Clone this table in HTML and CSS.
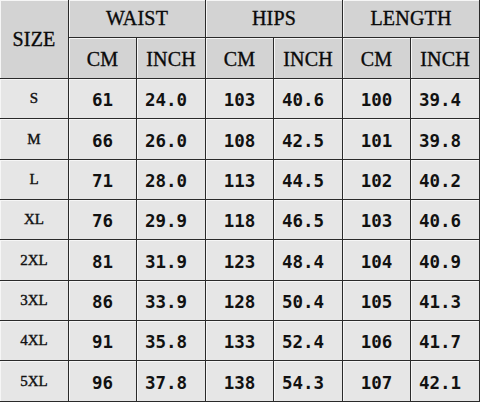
FILE: index.html
```html
<!DOCTYPE html>
<html>
<head>
<meta charset="utf-8">
<link rel="stylesheet" href="styles.css">
</head>
<body>
<table class="chart">
  <colgroup>
    <col class="c69"><col class="c68"><col class="c69"><col class="c68"><col class="c69"><col class="c68"><col class="c69">
  </colgroup>
  <thead>
    <tr class="h1">
      <th rowspan="2" class="size-head">SIZE</th>
      <th colspan="2">WAIST</th>
      <th colspan="2">HIPS</th>
      <th colspan="2">LENGTH</th>
    </tr>
    <tr class="h2">
      <th>CM</th><th>INCH</th>
      <th>CM</th><th>INCH</th>
      <th>CM</th><th>INCH</th>
    </tr>
  </thead>
  <tbody>
    <tr class="r40"><td class="sz">S</td><td class="num">61</td><td class="num in">24.0</td><td class="num">103</td><td class="num in">40.6</td><td class="num">100</td><td class="num in">39.4</td></tr>
    <tr class="r41"><td class="sz">M</td><td class="num">66</td><td class="num in">26.0</td><td class="num">108</td><td class="num in">42.5</td><td class="num">101</td><td class="num in">39.8</td></tr>
    <tr class="r40"><td class="sz">L</td><td class="num">71</td><td class="num in">28.0</td><td class="num">113</td><td class="num in">44.5</td><td class="num">102</td><td class="num in">40.2</td></tr>
    <tr class="r40"><td class="sz">XL</td><td class="num">76</td><td class="num in">29.9</td><td class="num">118</td><td class="num in">46.5</td><td class="num">103</td><td class="num in">40.6</td></tr>
    <tr class="r41"><td class="sz">2XL</td><td class="num">81</td><td class="num in">31.9</td><td class="num">123</td><td class="num in">48.4</td><td class="num">104</td><td class="num in">40.9</td></tr>
    <tr class="r40"><td class="sz">3XL</td><td class="num">86</td><td class="num in">33.9</td><td class="num">128</td><td class="num in">50.4</td><td class="num">105</td><td class="num in">41.3</td></tr>
    <tr class="r40"><td class="sz">4XL</td><td class="num">91</td><td class="num in">35.8</td><td class="num">133</td><td class="num in">52.4</td><td class="num">106</td><td class="num in">41.7</td></tr>
    <tr class="r41"><td class="sz">5XL</td><td class="num">96</td><td class="num in">37.8</td><td class="num">138</td><td class="num in">54.3</td><td class="num">107</td><td class="num in">42.1</td></tr>
  </tbody>
</table>
</body>
</html>
```
FILE: styles.css
```css
html, body {
  margin: 0;
  padding: 0;
  background: #e6e6e6;
}
.chart {
  border-collapse: separate;
  border-spacing: 0;
  table-layout: fixed;
  width: 480px;
}
.c69 { width: 69px; }
.c68 { width: 68px; }
.chart th, .chart td {
  box-sizing: border-box;
  padding: 0;
  text-align: center;
  vertical-align: middle;
  border-right: 1px solid #2a2a2a;
  border-bottom: 1px solid #2a2a2a;
  box-shadow: inset 1px 1px 0 #f6f6f6;
  color: #111;
  overflow: hidden;
  white-space: nowrap;
}
.chart th {
  background: #d3d3d3;
  font-family: "Liberation Serif", serif;
  font-weight: normal;
  font-size: 20px;
  letter-spacing: 0.2px;
  color: #0a0a0a;
  -webkit-text-stroke: 0.35px #0a0a0a;
}
.size-head { font-size: 20px; }
.h1 { height: 38px; }
.h2 { height: 41px; }
.h2 th { padding-top: 3px; }
.r40 { height: 40px; }
.r41 { height: 41px; }
.chart td { background: #e6e6e6; }
.sz {
  font-family: "Liberation Serif", serif;
  font-weight: normal;
  font-size: 15px;
  -webkit-text-stroke: 0.4px #111;
}
.num {
  font-family: "DejaVu Sans Mono", monospace;
  font-size: 17.5px;
  font-weight: bold;
  padding-top: 3px !important;
  color: #0c0c0c;
}
.num.in {
  text-align: left;
  padding-left: 8px !important;
}
```
